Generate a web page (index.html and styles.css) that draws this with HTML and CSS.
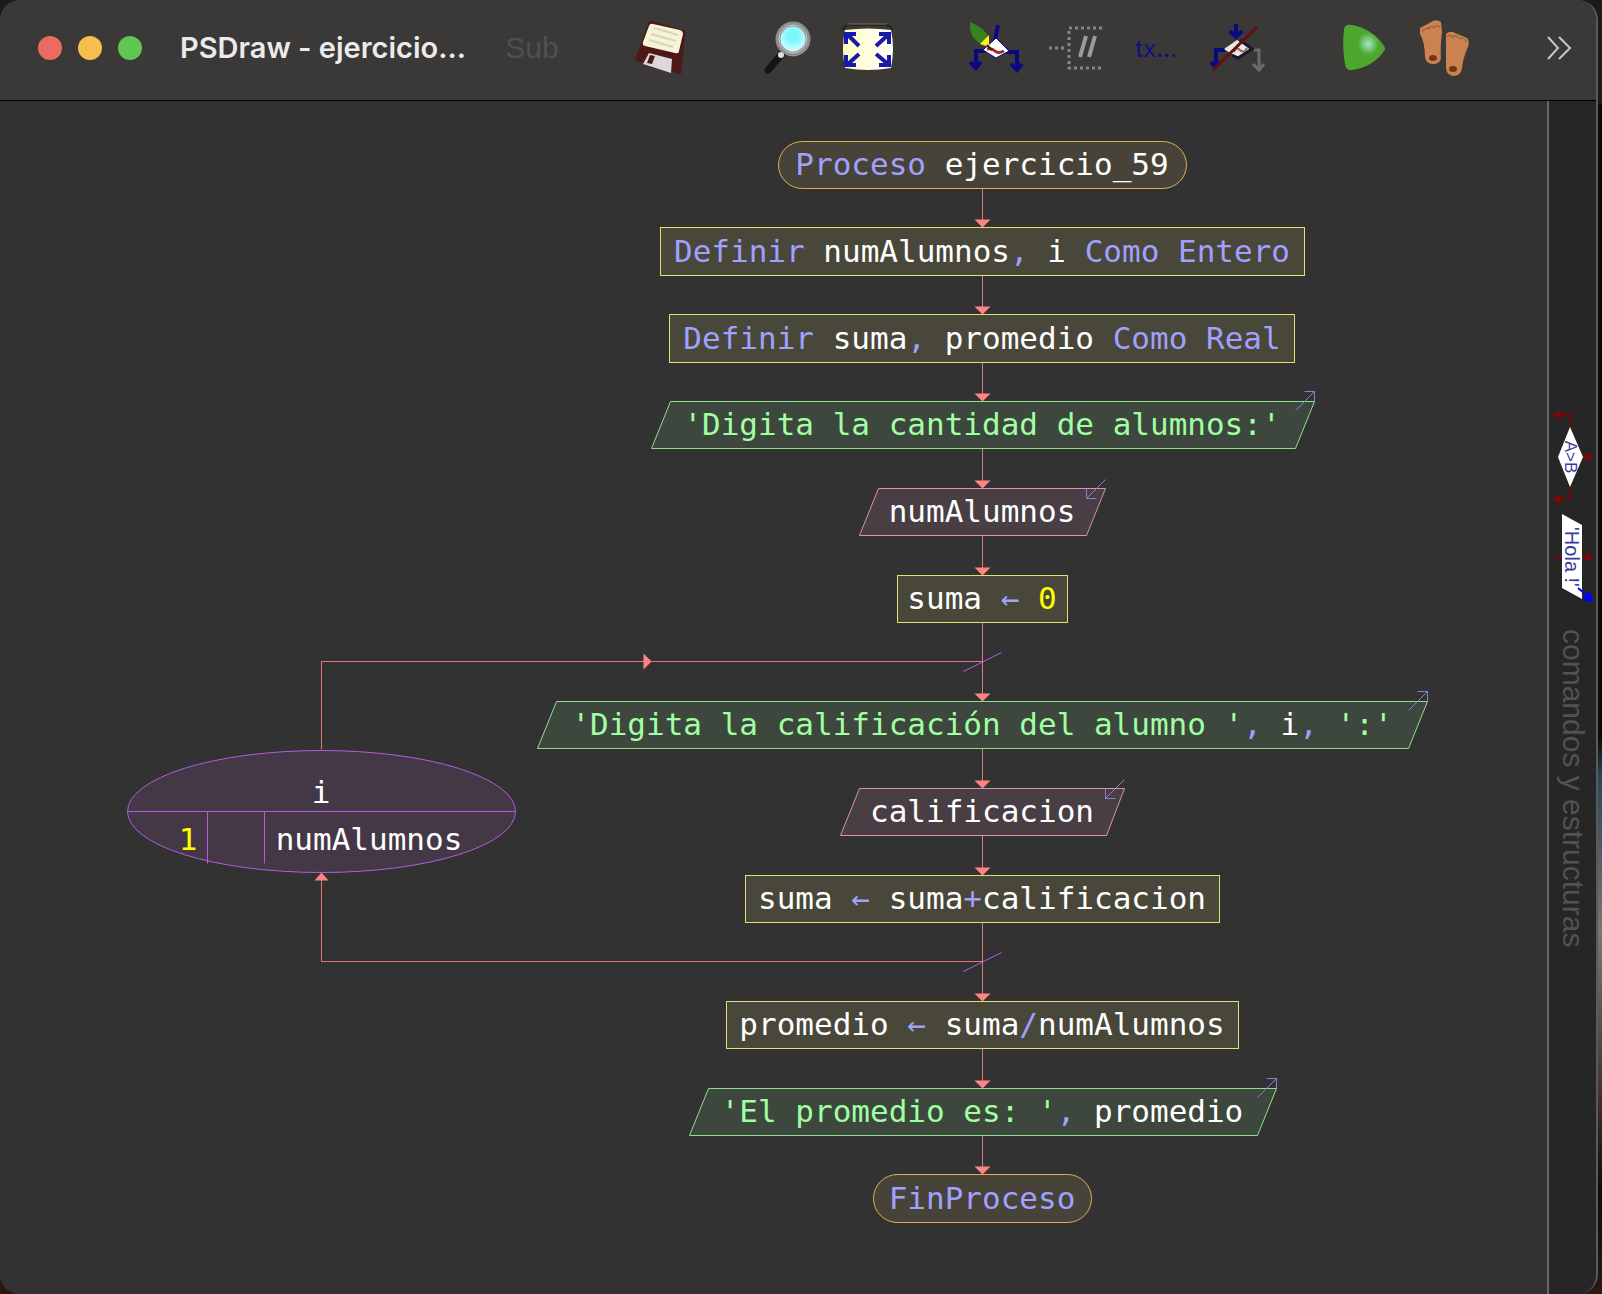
FILE: index.html
```html
<!DOCTYPE html>
<html lang="es">
<head>
<meta charset="utf-8">
<title>PSDraw - ejercicio_59</title>
<link rel="stylesheet" href="styles.css">
</head>
<body>
<div class="window">
  <header class="titlebar">
    <div class="lights">
      <button class="light close" aria-label="Cerrar"></button>
      <button class="light minimize" aria-label="Minimizar"></button>
      <button class="light maximize" aria-label="Maximizar"></button>
    </div>
    <h1 class="title">PSDraw - ejercicio...</h1>
    <div class="tools">
      <div class="group">
        <button class="tool sub" disabled>Sub</button>
      </div>
      <div class="group">
        <button class="tool" aria-label="Guardar">
          <svg viewBox="0 0 54 56"><path d="M16 2Q17 1 19 1L50 10Q53 11 52 14L48 54 17 47 2 40Z" fill="#4c1818"/><path d="M20 4Q17 3 16 6L10 22Q9 25 12 26L42 33Q46 34 46 31L50 14Q50 11 47 10Z" fill="#f8f2d8"/><path d="M21 8 45 15M18 14 43 21M16 20 40 27" stroke="#d3d9b4" stroke-width="2"/><path d="M16 33 39 39 38 53 10 44Z" fill="#ddd6da"/><path d="M17 35 22 36 19 44 14 43Z" fill="#4c1818"/></svg>
        </button>
      </div>
      <div class="group">
        <button class="tool" aria-label="Zoom">
          <svg viewBox="0 0 54 56"><defs><radialGradient id="lens" cx=".5" cy=".4" r=".6"><stop offset=".3" stop-color="#7df6ff"/><stop offset="1" stop-color="#f2ffff"/></radialGradient></defs><path d="M20 35 7 50" stroke="#141414" stroke-width="7" stroke-linecap="round"/><circle cx="32" cy="19" r="15" fill="url(#lens)" stroke="#8e8e8e" stroke-width="5"/><circle cx="32" cy="19" r="14" fill="none" stroke="#c9c9c9" stroke-width="1"/><circle cx="20" cy="35" r="3" fill="#ddd"/></svg>
        </button>
        <button class="tool" aria-label="Ajustar">
          <svg viewBox="0 0 54 56"><defs><linearGradient id="cream"><stop offset="0" stop-color="#fffcc4"/><stop offset="1" stop-color="#fffffa"/></linearGradient></defs><path d="M2 10Q3 5 8 5H44Q50 5 51 10" fill="none" stroke="#25241d" stroke-width="2"/><path d="M6 4H46" stroke="#77745c" stroke-width="1"/><path d="M4 10Q27 7 50 10Q54 28 50 48Q27 52 4 48Q0 28 4 10Z" fill="url(#cream)"/><g fill="none" stroke="#1a1aaa" stroke-width="4"><path d="M18 26 7 15M5 24V14H15M35 26 47 15M38 14H48V24M18 34 7 44M5 35V45H15M35 34 47 44M38 45H48V35"/></g></svg>
        </button>
      </div>
      <div class="group">
        <button class="tool" aria-label="Editar">
          <svg viewBox="0 0 54 56"><g fill="none" stroke="#0a0a80" stroke-width="4"><path d="M29 5 26 20 39 32H48V49M42 44 48 50 53 44M16 31H7V47M1 42 7 48 12 42"/></g><path d="M27 18 40 31 27 38 14 30Z" fill="#fff" stroke="#0a0a80" stroke-width="1"/><path d="M18 29Q23 28 26 31T35 31" fill="none" stroke="#a02b2b" stroke-width="3"/><path d="M1 2Q16 8 20 18L12 24Q0 18 1 2Z" fill="#37841f"/><path d="M11 24 20 15 20 27Z" fill="#ffef2a"/><path d="M18 25 23 30" stroke="#332200" stroke-width="2"/></svg>
        </button>
        <button class="tool" aria-label="Comentarios">
          <svg viewBox="0 0 54 56"><g fill="none" stroke="#858585" stroke-width="3" stroke-dasharray="3 3"><path d="M53 8H20V48H52M0 28H18"/></g><path d="M37 16 31 37M46 16 40 37" stroke="#9b9b9b" stroke-width="4"/></svg>
        </button>
        <button class="tool text-tool">tx...</button>
        <button class="tool" aria-label="Sintaxis">
          <svg viewBox="0 0 54 56"><g fill="none" stroke="#0a0a80" stroke-width="4"><path d="M27 4V17M21 11 27 17 33 11M16 30H7V45M2 42 6 47 11 42"/></g><path d="M45 30H50V50M44 44 50 50 55 44" fill="none" stroke="#6a6a6a" stroke-width="3"/><path d="M28 20 42 29 29 38 15 29Z" fill="#eee7dc"/><path d="M31 20 43 29 29 38 23 35" fill="none" stroke="#17172e" stroke-width="3"/><path d="M25 32Q27 26 31 30T38 28" fill="none" stroke="#866" stroke-width="2"/><path d="M4 50 48 7" stroke="#651010" stroke-width="3"/></svg>
        </button>
      </div>
      <div class="group">
        <button class="tool" aria-label="Ejecutar">
          <svg viewBox="0 0 54 56"><defs><radialGradient id="shine" cx=".6" cy=".42" r=".25"><stop offset="0" stop-color="#a5e8c4"/><stop offset="1" stop-color="#4da72f"/></radialGradient></defs><path d="M7 9Q8 4 15 5 36 9 47 26 49 29 47 31 36 47 15 50 9 51 8 44 5 27 7 9Z" fill="url(#shine)"/></svg>
        </button>
        <button class="tool" aria-label="Paso a paso">
          <svg viewBox="0 0 54 56"><g fill="#c98250"><path d="M3 8 16 1Q20-1 24 2L25 12Q23 28 24 38 23 44 16 44 9 44 8 37 8 23 3 14Z"/><path d="M29 14Q33 10 38 13L50 18Q53 21 51 27 46 38 45 48 44 56 36 56 29 55 29 47Z"/></g><g fill="none" stroke="#8f5630" stroke-width="1"><path d="M5 11Q9 7 13 9M11 8Q15 5 18 8M17 7Q20 4 23 7M30 16Q34 14 37 18M36 16Q40 15 43 19M43 18Q47 17 50 22"/></g><ellipse cx="16" cy="38" rx="4" ry="3" fill="#743619"/><ellipse cx="36" cy="49" rx="4" ry="3" fill="#743619"/></svg>
        </button>
      </div>
    </div>
    <button class="more" aria-label="Más"><svg viewBox="0 0 26 24"><path d="M2 1 12 12 2 23M13 1 24 12 13 23" fill="none" stroke="#c9c8c8" stroke-width="2"/></svg></button>
  </header>
  <div class="workspace">
    <main class="canvas">
      <svg class="shapes" width="1546" height="1192" viewBox="-.5 -.5 1546 1192">
        <defs>
          <path id="head" class="head" d="M-8-8H8L0 0Z"/>
          <path id="out" class="io" d="M-19 9 0-10M-10-10H0V0"/>
          <path id="in" class="io" d="M0-9-19 10M-19 0V10H-9"/>
        </defs>
        <g class="link">
          <path d="M982 87V126M982 174V213M982 261V300M982 347V386M982 434V473M982 521V600M982 647V686M982 734V773M982 821V899M982 947V986M982 1033V1073"/>
          <path d="M982 560H321V648M982 860H321V771"/>
        </g>
        <use href="#head" x="982" y="126"/><use href="#head" x="982" y="213"/><use href="#head" x="982" y="300"/><use href="#head" x="982" y="387"/><use href="#head" x="982" y="474"/><use href="#head" x="982" y="600"/><use href="#head" x="982" y="687"/><use href="#head" x="982" y="774"/><use href="#head" x="982" y="900"/><use href="#head" x="982" y="987"/><use href="#head" x="982" y="1073"/>
        <path class="head" d="M643 552 651 560 643 568ZM314 779H328L321 771Z"/>
        <rect class="terminal" x="778" y="40" width="408" height="47" rx="24"/>
        <rect class="step" x="660" y="126" width="644" height="48"/>
        <rect class="step" x="669" y="213" width="625" height="48"/>
        <path class="write" d="M670 300H1314L1295 347H651Z"/>
        <path class="read" d="M878 387H1105L1086 434H859Z"/>
        <rect class="step" x="897" y="474" width="170" height="47"/>
        <path class="write" d="M556 600H1427L1408 647H537Z"/>
        <path class="read" d="M859 687H1124L1106 734H840Z"/>
        <rect class="step" x="745" y="774" width="474" height="47"/>
        <rect class="step" x="726" y="900" width="512" height="47"/>
        <path class="write" d="M708 987H1276L1257 1034H689Z"/>
        <rect class="terminal" x="873" y="1073" width="218" height="48" rx="24"/>
        <use href="#out" x="1314" y="300"/><use href="#out" x="1427" y="600"/><use href="#out" x="1276" y="987"/>
        <use href="#in" x="1105" y="387"/><use href="#in" x="1124" y="687"/>
        <ellipse class="loop" cx="321" cy="710" rx="194" ry="61"/>
        <path class="loop" d="M127 710H515M207 710V762M264 710V762M963 570 1001 551M963 870 1001 851"/>
      </svg>
      <p class="label" style="top:39px"><b>Proceso</b> ejercicio_59</p>
      <p class="label" style="top:126px"><b>Definir</b> numAlumnos<b>,</b> i <b>Como Entero</b></p>
      <p class="label" style="top:213px"><b>Definir</b> suma<b>,</b> promedio <b>Como Real</b></p>
      <p class="label" style="top:299px"><q>'Digita la cantidad de alumnos:'</q></p>
      <p class="label" style="top:386px">numAlumnos</p>
      <p class="label" style="top:473px">suma <b>←</b> <i>0</i></p>
      <p class="label" style="top:599px"><q>'Digita la calificación del alumno '</q><b>,</b> i<b>,</b> <q>':'</q></p>
      <p class="label" style="top:686px">calificacion</p>
      <p class="label" style="top:773px">suma <b>←</b> suma<b>+</b>calificacion</p>
      <p class="label" style="top:899px">promedio <b>←</b> suma<b>/</b>numAlumnos</p>
      <p class="label" style="top:986px"><q>'El promedio es: '</q><b>,</b> promedio</p>
      <p class="label" style="top:1073px"><b>FinProceso</b></p>
      <p class="label counter">i</p>
      <p class="label from"><i>1</i></p>
      <p class="label to">numAlumnos</p>
    </main>
    <aside class="palette">
      <svg class="blocks" width="46" height="200" viewBox="0 0 46 200">
        <g fill="none" stroke="#720808" stroke-width="2"><path d="M10 14H21V26M10 98H21V86M33 56H42M5 156H42"/></g>
        <path fill="#820606" d="M3 14 12 9V19ZM3 98 12 93V103ZM33 56 42 51V61ZM33 156 42 151V161Z"/>
        <path fill="#fff" d="M21 26 34 56 21 86 9 56ZM13 113 33 124V198L13 187Z"/>
        <text class="if" x="56" y="-16" transform="rotate(90)">A&gt;B</text>
        <text class="hola" x="156" y="-16" transform="rotate(90)">'Hola !'</text>
        <path d="M29 187 40 196" stroke="#00f" stroke-width="2"/><path fill="#00f" d="M44 201 33 199 41 190Z"/>
      </svg>
      <span class="caption">comandos y estructuras</span>
    </aside>
  </div>
</div>
</body>
</html>
```
FILE: styles.css
```css
* { box-sizing: border-box; }
body {
  margin: 0;
  min-height: 100vh;
  display: flex;
  padding-right: 4px;
  background: linear-gradient(#1c1b1b 0 8%, #0b0b0b 8% 57%, #2c4654 60%, #7b7478 72%, #3b2a22 86%, #0c0c10 92%, #2a1a12);
}
button { border: 0; padding: 0; background: none; }
.window {
  flex: 1;
  min-width: 0;
  display: flex;
  flex-direction: column;
  border: solid #5a5a5a;
  border-width: 0 2px 0 0;
  border-radius: 20px;
  overflow: hidden;
  background: #323232;
}
.titlebar {
  height: 101px;
  display: flex;
  align-items: center;
  padding: 0 24px 4px 38px;
  background: #3b3838;
  border-bottom: 1px solid #000;
}
.lights { display: flex; gap: 16px; }
.light { width: 24px; height: 24px; border-radius: 50%; }
.close { background: #ed6a5e; }
.minimize { background: #f5bf4f; }
.maximize { background: #61c554; }
.title {
  margin: 0 0 0 38px;
  padding-bottom: 2px;
  width: 325px;
  font: 600 29px Inter, sans-serif;
  color: #ebebeb;
  white-space: nowrap;
}
.tools { display: flex; gap: 74px; }
.group { display: flex; gap: 26px; }
.tool { width: 54px; height: 56px; display: flex; align-items: center; justify-content: center; }
.tool svg { width: 54px; height: 56px; overflow: visible; }
.sub { font: 30px "Liberation Sans", sans-serif; color: #505050; }
.text-tool { font: 24px Inter, sans-serif; color: #10107e; }
.more { margin-left: auto; width: 26px; height: 24px; }
.more svg { display: block; }
.workspace { flex: 1; display: flex; }
.canvas { flex: 1; position: relative; min-width: 0; overflow: hidden; background: #323232; }
.shapes { display: block; }
.link { fill: none; stroke: #e07878; }
.head { fill: #ff8383; }
.io { fill: none; stroke: #8484c8; }
.terminal { fill: #484338; stroke: #e0ae58; }
.step { fill: #48473a; stroke: #e0e070; }
.write { fill: #3e473e; stroke: #8ce08c; }
.read { fill: #483e44; stroke: #e090b0; }
.loop { fill: #443847; stroke: #b45cdc; }
.label {
  position: absolute;
  left: 482px;
  width: 1000px;
  margin: 0;
  text-align: center;
  font: 31px/48px "DejaVu Sans Mono", monospace;
  color: #fff;
  white-space: pre;
}
.label b { font-weight: 400; color: #a0a0ff; }
.label i { font-style: normal; color: #ff0; }
.label q { quotes: none; color: #a0ffa0; }
.counter { left: 221px; top: 667px; width: 200px; }
.from { left: 168px; top: 714px; width: 40px; }
.to { left: 264px; top: 714px; width: 210px; }
.palette {
  width: 49px;
  padding-top: 300px;
  border-left: 2px solid #696969;
  background: #262626;
  display: flex;
  flex-direction: column;
  gap: 28px;
}
.blocks { overflow: visible; }
.blocks text { text-anchor: middle; fill: #3a3a9c; font-family: "Liberation Sans", sans-serif; }
.if { font-size: 17px; }
.hola { font-size: 20px; }
.caption {
  writing-mode: vertical-rl;
  font: 30px/46px "Liberation Sans", sans-serif;
  color: #525252;
}
```
